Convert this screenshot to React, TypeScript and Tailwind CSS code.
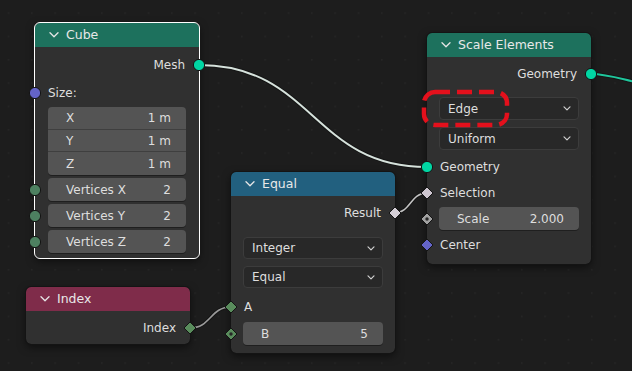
import React from "react";

type Shape = "circle" | "diamond" | "dot";

function Socket({ shape, color, side }: { shape: Shape; color: string; side: "left" | "right" }) {
  return (
    <svg
      className={`absolute top-1/2 -translate-y-1/2 w-[14px] h-[14px] ${side === "left" ? "left-[-7px]" : "right-[-7px]"}`}
      viewBox="0 0 14 14"
    >
      {shape === "circle" ? (
        <circle cx="7" cy="7" r="5.6" fill={color} stroke="#141414" strokeWidth="1" />
      ) : (
        <path d="M7 1 L13 7 L7 13 L1 7 Z" fill={color} stroke="#141414" strokeWidth="1" />
      )}
      {shape === "dot" && <circle cx="7" cy="7" r="1.7" fill="#262626" />}
    </svg>
  );
}

function Chevron() {
  return (
    <svg className="w-[10px] h-[6px]" viewBox="0 0 10 6">
      <path d="M1 0.8 L5 4.8 L9 0.8" fill="none" stroke="#e6e6e6" strokeWidth="1.3" strokeLinecap="round" strokeLinejoin="round" />
    </svg>
  );
}

function SmallChevron() {
  return (
    <svg className="w-[8px] h-[5px]" viewBox="0 0 8 5">
      <path d="M1 0.8 L4 3.8 L7 0.8" fill="none" stroke="#d0d0d0" strokeWidth="1.2" strokeLinecap="round" strokeLinejoin="round" />
    </svg>
  );
}

function Node({
  pos,
  header,
  title,
  selected,
  children,
}: {
  pos: string;
  header: string;
  title: string;
  selected?: boolean;
  children: React.ReactNode;
}) {
  return (
    <div
      className={`absolute ${pos} w-[164px] rounded-[5px] bg-[#303030] shadow-[0_3px_8px_rgba(0,0,0,0.55)] ${
        selected ? "outline outline-1 outline-white" : "outline outline-1 outline-[#141414]"
      }`}
    >
      <div className={`h-[24px] rounded-t-[5px] ${header} flex items-center pl-[14px] gap-[7px] text-[#e8e8e8]`}>
        <Chevron />
        <span className="text-[12.5px] leading-none">{title}</span>
      </div>
      {children}
    </div>
  );
}

function OutRow({ label, shape, color, cls }: { label: string; shape: Shape; color: string; cls: string }) {
  return (
    <div className={`relative h-[22px] flex items-center justify-end pr-[14px] ${cls}`}>
      <span>{label}</span>
      <Socket shape={shape} color={color} side="right" />
    </div>
  );
}

function InRow({ label, shape, color, cls }: { label: string; shape?: Shape; color?: string; cls: string }) {
  return (
    <div className={`relative h-[22px] flex items-center pl-[13px] ${cls}`}>
      <span>{label}</span>
      {shape && color && <Socket shape={shape} color={color} side="left" />}
    </div>
  );
}

function Dropdown({ label, cls }: { label: string; cls: string }) {
  return (
    <div className={`mx-[12px] h-[23px] rounded-[4px] bg-[#282828] border border-[#3c3c3c] flex items-center justify-between pl-[8px] pr-[7px] ${cls}`}>
      <span>{label}</span>
      <SmallChevron />
    </div>
  );
}

function Field({
  label,
  value,
  cls,
  socket,
}: {
  label: string;
  value: string;
  cls: string;
  socket?: { shape: Shape; color: string };
}) {
  return (
    <div className={`relative h-[23px] ${cls}`}>
      {socket && <Socket shape={socket.shape} color={socket.color} side="left" />}
      <div className="mx-[12px] h-full rounded-[4px] bg-[#545454] shadow-[0_1px_0_rgba(0,0,0,0.35)] flex items-center justify-between pl-[18px] pr-[15px]">
        <span>{label}</span>
        <span>{value}</span>
      </div>
    </div>
  );
}

export default function App() {
  return (
    <div className="relative w-[632px] h-[371px] overflow-hidden bg-[#1d1d1d] font-['DejaVu_Sans',sans-serif] text-[12px] text-[#dedede]">
      <svg className="absolute inset-0 w-[632px] h-[371px]" viewBox="0 0 632 371">
        <defs>
          <pattern id="grid" x="7.7" y="12.3" width="23.33" height="23.33" patternUnits="userSpaceOnUse">
            <rect x="0" y="0" width="1.6" height="1.6" fill="#262626" />
          </pattern>
        </defs>
        <rect x="0" y="0" width="632" height="371" fill="url(#grid)" />
        <path d="M199 65 C313 65 313 167 427 167" fill="none" stroke="#151515" strokeWidth="4" />
        <path d="M199 65 C313 65 313 167 427 167" fill="none" stroke="#d6e2dc" strokeWidth="2" />
        <path d="M591 74 C615 74 630 84 680 90" fill="none" stroke="#151515" strokeWidth="4" />
        <path d="M591 74 C615 74 630 84 680 90" fill="none" stroke="#1fc69c" strokeWidth="2" />
        <path d="M394 213 C411 213 410 193 427 193" fill="none" stroke="#151515" strokeWidth="3.5" />
        <path d="M394 213 C411 213 410 193 427 193" fill="none" stroke="#c4c4c4" strokeWidth="1.6" />
        <path d="M190 328 C211 328 210 307 231 307" fill="none" stroke="#151515" strokeWidth="3.5" />
        <path d="M190 328 C211 328 210 307 231 307" fill="none" stroke="#9a9a9a" strokeWidth="1.6" />
      </svg>

      {/* Cube */}
      <Node pos="left-[35px] top-[23px]" header="bg-[#1d715d]" title="Cube" selected>
        <div className="pt-[7px] pb-[5px]">
          <OutRow label="Mesh" shape="circle" color="#00d6a3" cls="" />
          <InRow label="Size:" shape="circle" color="#6363c7" cls="mt-[6px]" />
          <div className="mt-[3px] mx-[13px] rounded-[4px] bg-[#545454] overflow-hidden shadow-[0_1px_0_rgba(0,0,0,0.35)]">
            <div className="h-[23px] flex items-center justify-between pl-[18px] pr-[15px] border-b border-[#3f3f3f]">
              <span>X</span>
              <span>1 m</span>
            </div>
            <div className="h-[22px] flex items-center justify-between pl-[18px] pr-[15px] border-b border-[#3f3f3f]">
              <span>Y</span>
              <span>1 m</span>
            </div>
            <div className="h-[23px] flex items-center justify-between pl-[18px] pr-[15px]">
              <span>Z</span>
              <span>1 m</span>
            </div>
          </div>
          <Field label="Vertices X" value="2" cls="mt-[3px] [&>div]:mx-[13px]" socket={{ shape: "circle", color: "#4d8060" }} />
          <Field label="Vertices Y" value="2" cls="mt-[3px] [&>div]:mx-[13px]" socket={{ shape: "circle", color: "#4d8060" }} />
          <Field label="Vertices Z" value="2" cls="mt-[3px] [&>div]:mx-[13px]" socket={{ shape: "circle", color: "#4d8060" }} />
        </div>
      </Node>

      {/* Scale Elements */}
      <Node pos="left-[427px] top-[33px]" header="bg-[#1d715d]" title="Scale Elements">
        <div className="pt-[6px] pb-[8px]">
          <OutRow label="Geometry" shape="circle" color="#00d6a3" cls="" />
          <Dropdown label="Edge" cls="mt-[12px]" />
          <Dropdown label="Uniform" cls="mt-[7px]" />
          <InRow label="Geometry" shape="circle" color="#00d6a3" cls="mt-[6px]" />
          <InRow label="Selection" shape="diamond" color="#cec6d0" cls="mt-[4px]" />
          <Field label="Scale" value="2.000" cls="mt-[3px]" socket={{ shape: "dot", color: "#a1a1a1" }} />
          <InRow label="Center" shape="diamond" color="#6363c7" cls="mt-[4px]" />
        </div>
      </Node>

      {/* Equal */}
      <Node pos="left-[231px] top-[172px]" header="bg-[#22607f]" title="Equal">
        <div className="pt-[6px] pb-[8px]">
          <OutRow label="Result" shape="diamond" color="#d4ced6" cls="" />
          <div className="mt-[13px] [&>div]:h-[22px]">
            <Dropdown label="Integer" cls="" />
          </div>
          <div className="mt-[7px] [&>div]:h-[22px]">
            <Dropdown label="Equal" cls="" />
          </div>
          <InRow label="A" shape="diamond" color="#598c5c" cls="mt-[8px]" />
          <Field label="B" value="5" cls="mt-[4px] h-[22px]" socket={{ shape: "dot", color: "#598c5c" }} />
        </div>
      </Node>

      {/* Index */}
      <Node pos="left-[26px] top-[287px]" header="bg-[#7f2c4a]" title="Index">
        <div className="pt-[6px] pb-[5px]">
          <OutRow label="Index" shape="diamond" color="#598c5c" cls="" />
        </div>
      </Node>

      {/* Annotation */}
      <svg className="absolute inset-0 w-[632px] h-[371px] pointer-events-none" viewBox="0 0 632 371">
        <rect x="424" y="92" width="83" height="33" rx="11" fill="none" stroke="#e4101c" strokeWidth="4.5" strokeDasharray="15 7" />
      </svg>
    </div>
  );
}
